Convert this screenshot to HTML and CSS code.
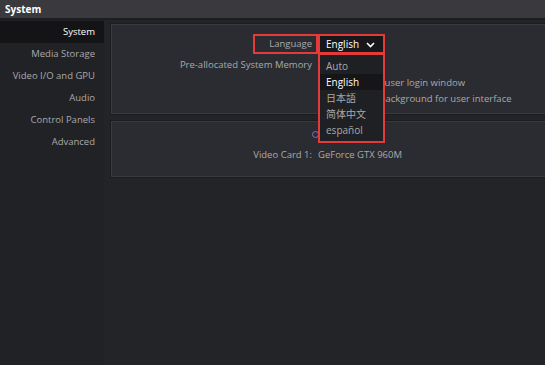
FILE: index.html
```html
<html>
    <head>
        <title>System</title>
        <link rel="stylesheet" href="styles.css">
    </head>
    <body>
        <div class="titlebar">System</div>
        <div class="main">
            <div class="sidebar">
                <div class="navItem selected">System</div>
                <div class="navItem">Media Storage</div>
                <div class="navItem">Video I/O and GPU</div>
                <div class="navItem">Audio</div>
                <div class="navItem">Control Panels</div>
                <div class="navItem">Advanced</div>
            </div>
            <div class="content">
                <div class="panel general">
                    <div class="row tall">
                        <div class="label"><span class="marked">Language</span></div>
                        <div class="value">
                            <div class="select">
                                <span>English</span>
                                <svg class="chevron" width="9" height="6" viewBox="0 0 9 6"><path d="M1 1 L4.5 4.5 L8 1" fill="none" stroke="#fff" stroke-width="1.6"/></svg>
                                <div class="options">
                                    <div class="option">Auto</div>
                                    <div class="option current">English</div>
                                    <div class="option">日本語</div>
                                    <div class="option">简体中文</div>
                                    <div class="option">español</div>
                                </div>
                            </div>
                        </div>
                    </div>
                    <div class="row tall">
                        <div class="label">Pre-allocated System Memory</div>
                        <div class="value"></div>
                    </div>
                    <div class="checks">
                        <div class="row">
                            <div class="label"></div>
                            <div class="value check"><span class="box"></span>Auto skip user login window</div>
                        </div>
                        <div class="row">
                            <div class="label"></div>
                            <div class="value check"><span class="box"></span>Use dim background for user interface</div>
                        </div>
                    </div>
                </div>
                <div class="panel gpu">
                    <div class="row">
                        <div class="label"></div>
                        <div class="value"><span class="radio"></span></div>
                    </div>
                    <div class="row">
                        <div class="label">Video Card 1:</div>
                        <div class="value">GeForce GTX 960M</div>
                    </div>
                </div>
            </div>
        </div>
    </body>
</html>
```

FILE: styles.css
```css
body {
    margin: 0;
    background-color: #26272b;
    font-family: "Open Sans", "Noto Sans CJK SC", sans-serif;
    font-size: 9.5px;
    color: #a9a9ab;
    overflow: hidden;
}

.titlebar {
    height: 18px;
    line-height: 18px;
    padding-left: 5px;
    background-color: #3a3a3e;
    color: #fff;
    font-weight: bold;
    font-size: 10px;
    border-bottom: 2px solid #1d1e21;
}

.main {
    display: flex;
    height: 345px;
}

.sidebar {
    width: 104px;
    padding-top: 1px;
    background-color: #212226;
}

.navItem {
    height: 22px;
    line-height: 21px;
    text-align: right;
    padding-right: 9px;
}

.navItem.selected {
    background-color: #141416;
    color: #fff;
}

.content {
    flex: 1;
    padding: 4px 0 0 7px;
    background-color: #232428;
}

.panel {
    background-color: #2b2c31;
    border: 1px solid #3a3b40;
    border-right: none;
    box-shadow: 0 0 0 1px #1b1c1f;
    margin-bottom: 7px;
    box-sizing: border-box;
}

.general {
    height: 90px;
    padding-top: 9px;
}

.gpu {
    height: 56px;
    padding-top: 9px;
}

.row {
    display: grid;
    grid-template-columns: 200px 1fr;
    column-gap: 6px;
    height: 16px;
    line-height: 16px;
}

.row.tall {
    height: 21px;
    line-height: 20px;
}

.checks {
    margin-top: -1px;
}

.label {
    text-align: right;
}

.marked {
    display: inline-block;
    border: 2px solid #e53a3a;
    padding: 0 4px 0 14px;
    margin-right: -6px;
    line-height: 16px;
}

.value {
    position: relative;
}

.check {
    padding-left: 6px;
}

.box {
    display: inline-block;
    width: 9px;
    height: 9px;
    border: 1px solid #5a5b60;
    margin-right: 6px;
    vertical-align: -1px;
}

.radio {
    display: inline-block;
    width: 5px;
    height: 5px;
    border: 1px solid #7a6fd0;
    border-radius: 50%;
    margin-left: -6px;
    vertical-align: middle;
}

.select {
    position: absolute;
    left: 0;
    top: 0;
    width: 57px;
    height: 16px;
    line-height: 16px;
    border: 2px solid #e53a3a;
    background-color: #18181b;
    color: #fff;
    padding-left: 6px;
    font-size: 10px;
    z-index: 2;
}

.chevron {
    position: absolute;
    right: 8px;
    top: 6px;
}

.options {
    position: absolute;
    left: -2px;
    top: 18px;
    width: 57px;
    height: 83px;
    padding: 3px 0 0 6px;
    border: 2px solid #e53a3a;
    border-top-width: 1px;
    background-color: #1f2024;
    color: #a9a9ab;
}

.option {
    height: 16px;
    line-height: 16px;
}

.option.current {
    background-color: #161619;
    color: #fff;
    margin-left: -6px;
    padding-left: 6px;
}
```
